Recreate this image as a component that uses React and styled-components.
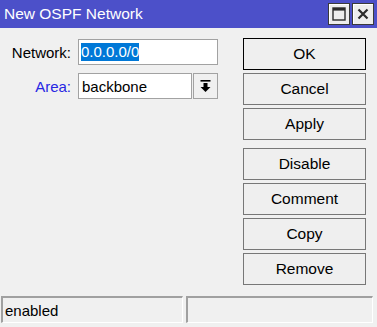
import React from "react";
import styled, { createGlobalStyle } from "styled-components";

const GlobalStyle = createGlobalStyle`
  html, body {
    margin: 0;
    padding: 0;
    background: #f0f0f0;
  }
  body {
    font-family: "Liberation Sans", Arial, sans-serif;
    font-size: 15px;
    color: #000;
  }
`;

const NetworkDialog = () => {
  return (
    <StyledWindow>
      <GlobalStyle />
      <TitleBar>
        <TitleText>New OSPF Network</TitleText>
        <TitleButtons>
          <TitleButton aria-label="maximize">
            <svg width="14" height="14" viewBox="0 0 14 14">
              <rect x="1" y="1" width="12" height="12" fill="none" stroke="#2b2b2b" strokeWidth="1.4" />
              <rect x="1" y="1" width="12" height="2.6" fill="#2b2b2b" />
            </svg>
          </TitleButton>
          <TitleButton aria-label="close">
            <svg width="12" height="12" viewBox="0 0 12 12">
              <path d="M1.5 1.5 L10.5 10.5 M10.5 1.5 L1.5 10.5" stroke="#2b2b2b" strokeWidth="2.2" />
            </svg>
          </TitleButton>
        </TitleButtons>
      </TitleBar>

      <Content>
        <Form>
          <FieldRow>
            <Label>Network:</Label>
            <Field width="140px">
              <Selected>0.0.0.0/0</Selected>
            </Field>
          </FieldRow>
          <FieldRow>
            <Label blue>Area:</Label>
            <Field width="114px">backbone</Field>
            <DropButton aria-label="open">
              <svg width="11" height="13" viewBox="0 0 11 13">
                <rect x="0.5" y="0" width="10" height="1.6" fill="#000" />
                <rect x="3.5" y="3" width="4" height="4" fill="#000" />
                <path d="M0.5 7 L10.5 7 L5.5 12 Z" fill="#000" />
              </svg>
            </DropButton>
          </FieldRow>
        </Form>

        <Actions>
          <ButtonGroup>
            <ActionButton primary>OK</ActionButton>
            <ActionButton>Cancel</ActionButton>
            <ActionButton>Apply</ActionButton>
          </ButtonGroup>
          <ButtonGroup>
            <ActionButton>Disable</ActionButton>
            <ActionButton>Comment</ActionButton>
            <ActionButton>Copy</ActionButton>
            <ActionButton>Remove</ActionButton>
          </ButtonGroup>
        </Actions>
      </Content>

      <StatusBar>
        <StatusPanel width="182px">enabled</StatusPanel>
        <StatusPanel width="187px" />
      </StatusBar>
    </StyledWindow>
  );
};

const StyledWindow = styled.div`
  width: 377px;
  height: 327px;
  display: flex;
  flex-direction: column;
  background: #f0f0f0;
  overflow: hidden;
`;

const TitleBar = styled.div`
  height: 28px;
  flex-shrink: 0;
  background: #4c50c9;
  display: flex;
  align-items: center;
  justify-content: space-between;
  padding: 0 3px 0 4px;
`;

const TitleText = styled.div`
  color: #fff;
  font-size: 15.5px;
  line-height: 28px;
`;

const TitleButtons = styled.div`
  display: flex;
  gap: 2px;
`;

const TitleButton = styled.div`
  width: 22px;
  height: 22px;
  box-sizing: border-box;
  border: 1px solid #3a3a3a;
  background: #ededed;
  box-shadow: inset 1px 1px 0 #fff;
  display: flex;
  align-items: center;
  justify-content: center;
`;

const Content = styled.div`
  flex: 1;
  display: flex;
  justify-content: space-between;
  padding: 10px 11px 0 0;
`;

const Form = styled.div`
  display: flex;
  flex-direction: column;
  gap: 8px;
  padding-top: 1px;
`;

const FieldRow = styled.div`
  display: flex;
  align-items: center;
  height: 26px;
`;

const Label = styled.div`
  width: 71px;
  margin-right: 7px;
  text-align: right;
  color: ${(p) => (p.blue ? "#2727e3" : "#000")};
`;

const Field = styled.div`
  width: ${(p) => p.width};
  height: 26px;
  box-sizing: border-box;
  border: 1px solid #a2a2a2;
  background: #fff;
  padding-left: 3px;
  display: flex;
  align-items: center;
  white-space: nowrap;
`;

const Selected = styled.span`
  display: inline-block;
  background: #0078d7;
  color: #fff;
  line-height: 18px;
  margin-left: -1px;
`;

const DropButton = styled.div`
  width: 25px;
  height: 26px;
  margin-left: 1px;
  box-sizing: border-box;
  border: 1px solid #a2a2a2;
  background: #f0f0f0;
  display: flex;
  align-items: center;
  justify-content: center;
`;

const Actions = styled.div`
  width: 123px;
  display: flex;
  flex-direction: column;
  gap: 8px;
`;

const ButtonGroup = styled.div`
  display: flex;
  flex-direction: column;
  gap: 3px;
`;

const ActionButton = styled.div`
  height: 32px;
  box-sizing: border-box;
  border: 1px solid ${(p) => (p.primary ? "#000" : "#777")};
  background: #efefef;
  display: flex;
  align-items: center;
  justify-content: center;
  font-size: 15.5px;
  color: #000;
`;

const StatusBar = styled.div`
  height: 31px;
  flex-shrink: 0;
  display: flex;
  gap: 3px;
  padding: 0 0 4px 1px;
  box-sizing: border-box;
`;

const StatusPanel = styled.div`
  width: ${(p) => p.width};
  height: 27px;
  box-sizing: border-box;
  border-top: 2px solid #a0a0a0;
  border-left: 2px solid #a0a0a0;
  border-right: 1px solid #fff;
  border-bottom: 1px solid #fff;
  padding-left: 2px;
  display: flex;
  align-items: center;
`;

export default NetworkDialog;
